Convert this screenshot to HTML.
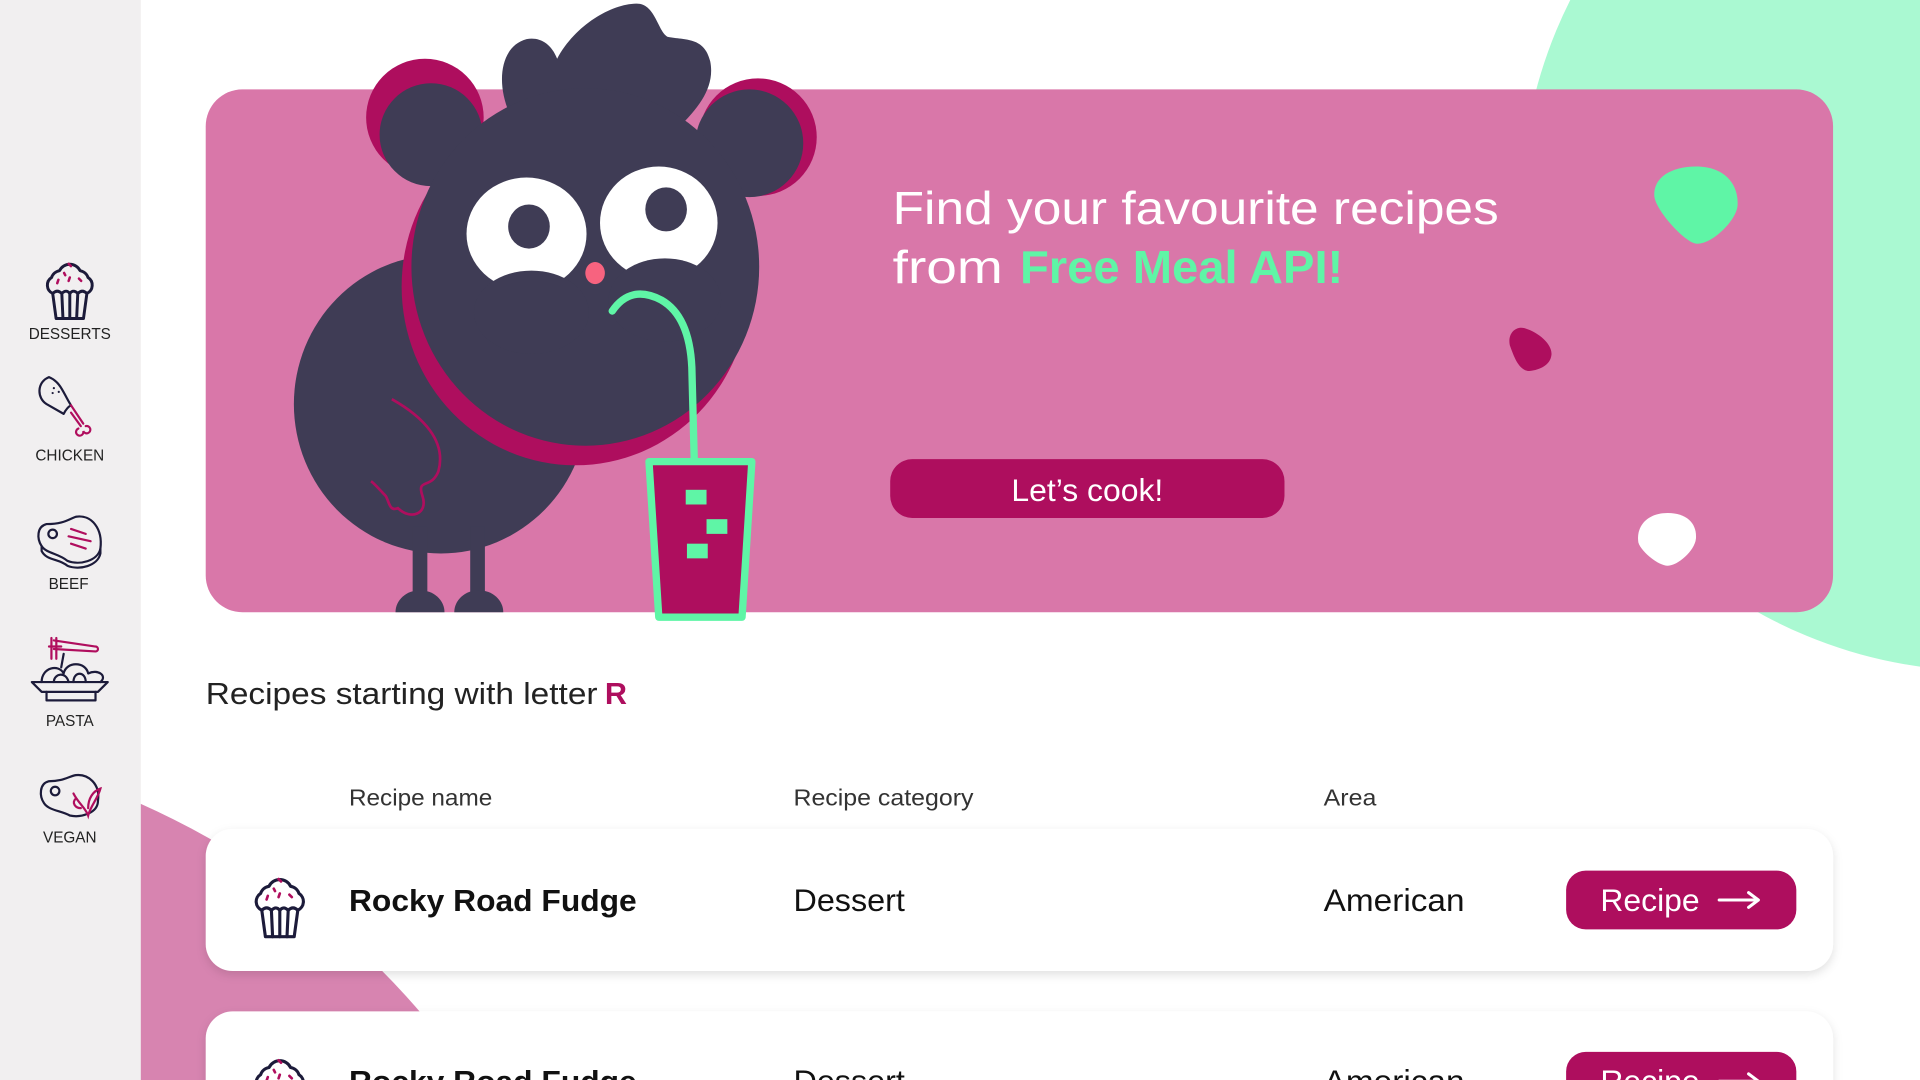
<!DOCTYPE html>
<html><head><meta charset="utf-8"><style>
html,body{margin:0;padding:0;width:1920px;height:1080px;overflow:hidden;background:#fff}
svg{display:block}
text{font-family:"Liberation Sans",sans-serif}
</style></head><body>
<svg width="1920" height="1080" viewBox="0 0 1568 882" xmlns="http://www.w3.org/2000/svg">
<defs>
<filter id="sh" x="-5%" y="-20%" width="110%" height="150%"><feDropShadow dx="0" dy="3" stdDeviation="4" flood-color="#000" flood-opacity="0.12"/></filter>
<symbol id="cup" viewBox="0 0 50 58">
<g fill="none" stroke="#1c1b3a" stroke-width="2.6" stroke-linejoin="round" stroke-linecap="round">
<path d="M10 34 A8 8 0 0 1 9 20 A9 9 0 0 1 16 14 A10 10 0 0 1 34 14 A9 9 0 0 1 41 20 A8 8 0 0 1 40 34"/>
<path d="M10 34 Q14 30 18 34 Q22 30 25 34 Q28 30 32 34 Q36 30 40 34"/>
<path d="M10 34 L13 56 L37 56 L40 34"/>
<path d="M18 34 L19 56 M25 34 L25 56 M32 34 L31 56"/>
</g>
<g stroke="#b00e5e" stroke-width="2.2" stroke-linecap="round"><path d="M24 8 l2 2 M15 22 l-1 3 M25 20 l-1 3 M33 21 l2 2 M20 16 l1 2"/></g>
</symbol>
</defs>
<circle cx="1620" cy="170" r="378" fill="#aaf9d2"/>
<circle cx="-150" cy="1250" r="650" fill="#d784b0"/>
<rect x="0" y="0" width="115" height="882" fill="#f1eff0"/>
<rect x="168" y="73" width="1329" height="427" rx="30" fill="#d977a9"/>
<g>
<circle cx="347" cy="96" r="48" fill="#ae0e5e"/>
<circle cx="352" cy="110" r="42" fill="#3f3c55"/>
<circle cx="619" cy="112" r="48" fill="#ae0e5e"/>
<circle cx="612" cy="117" r="44" fill="#3f3c55"/>
<path d="M436 118 C405 95 400 40 430 32 C440 30 450 35 455 48 C470 20 500 3 520 3 C535 3 537 25 545 30 C560 33 575 30 580 50 C585 75 565 95 540 117 Z" fill="#3f3c55"/>
<ellipse cx="360" cy="330" rx="120" ry="122" fill="#3f3c55"/>
<ellipse cx="470" cy="234" rx="142" ry="146" fill="#ae0e5e"/>
<ellipse cx="478" cy="218" rx="142" ry="146" fill="#3f3c55"/>
<rect x="337" y="430" width="12" height="65" fill="#3f3c55"/>
<rect x="384" y="430" width="12" height="65" fill="#3f3c55"/>
<path d="M323 500 A20 18 0 0 1 363 500 Z" fill="#3f3c55"/>
<path d="M371 500 A20 18 0 0 1 411 500 Z" fill="#3f3c55"/>
<path d="M320 326 C345 340 365 360 358 385 C352 400 340 390 345 405 C350 420 335 425 325 415 C318 418 318 410 315 405 C310 400 306 395 303 393" fill="none" stroke="#ae0e5e" stroke-width="2.2"/>
<ellipse cx="430" cy="191" rx="49" ry="46" fill="#fff"/>
<ellipse cx="538" cy="182" rx="48" ry="46" fill="#fff"/>
<ellipse cx="434" cy="255" rx="47" ry="34" fill="#3f3c55"/>
<ellipse cx="543" cy="245" rx="46" ry="34" fill="#3f3c55"/>
<ellipse cx="432" cy="185" rx="17" ry="18" fill="#3f3c55"/>
<ellipse cx="544" cy="171" rx="17" ry="18" fill="#3f3c55"/>
<ellipse cx="486" cy="223" rx="8" ry="9" fill="#f7637f"/>
<path d="M500 254 Q515 232 540 245 Q563 258 565 300 L567 377" fill="none" stroke="#5ff5a6" stroke-width="6" stroke-linecap="round"/>
<path d="M530 377 L614 377 L606 504 L538 504 Z" fill="#ae0e5e" stroke="#5ff5a6" stroke-width="6" stroke-linejoin="round"/>
<rect x="560" y="400" width="17" height="12" fill="#5ff5a6"/>
<rect x="577" y="424" width="17" height="12" fill="#5ff5a6"/>
<rect x="561" y="444" width="17" height="12" fill="#5ff5a6"/>
</g>
<path d="M1385 136 C1410 136 1420 152 1419 168 C1418 180 1398 200 1385 199 C1376 198 1352 172 1351 160 C1350 145 1365 136 1385 136 Z" fill="#5ff5a6"/>
<path d="M1245 268 C1258 272 1268 282 1267 290 C1266 298 1258 302 1249 303 C1240 303 1236 290 1233 282 C1231 272 1238 266 1245 268 Z" fill="#ae0e5e"/>
<path d="M1362 419 C1378 419 1386 428 1385 440 C1384 450 1370 462 1362 462 C1354 462 1340 450 1338 443 C1336 430 1345 419 1362 419 Z" fill="#fff"/>
<text x="729" y="183" font-size="38" fill="#fff" textLength="495" lengthAdjust="spacingAndGlyphs">Find your favourite recipes</text>
<text x="729" y="231" font-size="38" fill="#fff" textLength="90" lengthAdjust="spacingAndGlyphs">from</text>
<text x="833" y="231" font-size="38" font-weight="bold" fill="#5ff5a6" textLength="264" lengthAdjust="spacingAndGlyphs">Free Meal API!</text>
<rect x="727" y="375" width="322" height="48" rx="18" fill="#ae0e5e"/>
<text x="888" y="409" font-size="26" fill="#fff" text-anchor="middle" textLength="124" lengthAdjust="spacingAndGlyphs">Let’s cook!</text>
<g fill="#222" font-size="12.5" text-anchor="middle">
<text x="57" y="277">DESSERTS</text>
<text x="57" y="376">CHICKEN</text>
<text x="56" y="481">BEEF</text>
<text x="57" y="593">PASTA</text>
<text x="57" y="688">VEGAN</text>
</g>
<use href="#cup" x="33" y="208" width="48" height="54"/>
<g fill="none" stroke="#1c1b3a" stroke-width="1.8" stroke-linecap="round" stroke-linejoin="round">
<path d="M40 308 C30 312 30 325 38 330 L52 338 C54 334 56 332 58 331 C52 322 50 312 40 308 Z"/>
<path d="M38 428 C30 430 30 440 34 446 C38 452 48 452 55 458 C65 462 80 458 82 448 C84 432 75 420 62 422 C56 424 52 428 38 428 Z"/>
<path d="M34 446 L34 450 C38 458 48 456 55 462 C65 466 80 462 82 452 L82 448"/>
<circle cx="43" cy="436" r="3.5"/>
<path d="M26 557 L88 557 L80 565 L34 565 Z"/>
<path d="M38 565 L38 572 L78 572 L78 565"/>
<path d="M34 557 C34 545 48 542 52 550 C54 540 70 540 72 550 C80 546 88 552 82 557"/>
<path d="M44 557 C44 550 54 548 56 557 M60 557 C60 548 70 548 70 557"/>
<path d="M52 534 L50 545"/>
<path d="M40 638 C32 640 32 650 36 656 C40 662 50 662 57 666 C66 668 80 664 80 654 C82 640 72 632 62 633 C56 634 52 638 40 638 Z"/>
<circle cx="45" cy="646" r="3.5"/>
</g>
<g fill="none" stroke="#b00e5e" stroke-width="1.8" stroke-linecap="round">
<path d="M58 331 L68 346 M58 337 L66 348 M64 350 a3 3 0 1 0 4 2 a3 3 0 1 0 2 -4"/>
<path d="M58 432 L70 436 M56 438 L74 442 M58 444 L70 448"/>
<path d="M44 523 L78 528 A2 2 0 0 1 78 532 L44 530 M42 521 L42 538 M46 521 L46 538 M40 528 L50 528"/>
<path d="M60 648 C64 656 70 660 72 666 C74 658 80 652 82 644 C76 646 72 652 72 660 M62 652 C58 656 62 660 66 660"/>
</g>
<g fill="#1c1b3a"><circle cx="44" cy="317" r="0.9"/><circle cx="48" cy="320" r="0.9"/><circle cx="43" cy="321" r="0.9"/></g>
<text x="168" y="575" font-size="25" fill="#222" textLength="320" lengthAdjust="spacingAndGlyphs">Recipes starting with letter</text>
<text x="494" y="575" font-size="25" font-weight="bold" fill="#ae0e5e">R</text>
<g font-size="19" fill="#333">
<text x="285" y="658" textLength="117" lengthAdjust="spacingAndGlyphs">Recipe name</text>
<text x="648" y="658" textLength="147" lengthAdjust="spacingAndGlyphs">Recipe category</text>
<text x="1081" y="658" textLength="43" lengthAdjust="spacingAndGlyphs">Area</text>
</g>
<rect x="168" y="677" width="1329" height="116" rx="22" fill="#fff" filter="url(#sh)"/>
<use href="#cup" x="204" y="710" width="49" height="57"/>
<text x="285" y="744" font-size="25" font-weight="bold" fill="#111" textLength="235" lengthAdjust="spacingAndGlyphs">Rocky Road Fudge</text>
<text x="648" y="744" font-size="26" fill="#111" textLength="91" lengthAdjust="spacingAndGlyphs">Dessert</text>
<text x="1081" y="744" font-size="26" fill="#111" textLength="115" lengthAdjust="spacingAndGlyphs">American</text>
<rect x="1279" y="711" width="188" height="48" rx="16" fill="#ae0e5e"/>
<text x="1307" y="744" font-size="26" fill="#fff" textLength="81" lengthAdjust="spacingAndGlyphs">Recipe</text>
<path d="M1404 735 L1436 735 M1428 729 L1436 735 L1428 741" fill="none" stroke="#fff" stroke-width="2.5" stroke-linecap="round" stroke-linejoin="round"/>
<rect x="168" y="826" width="1329" height="116" rx="22" fill="#fff" filter="url(#sh)"/>
<use href="#cup" x="204" y="858" width="49" height="57"/>
<text x="285" y="892" font-size="25" font-weight="bold" fill="#111" textLength="235" lengthAdjust="spacingAndGlyphs">Rocky Road Fudge</text>
<text x="648" y="892" font-size="26" fill="#111" textLength="91" lengthAdjust="spacingAndGlyphs">Dessert</text>
<text x="1081" y="892" font-size="26" fill="#111" textLength="115" lengthAdjust="spacingAndGlyphs">American</text>
<rect x="1279" y="859" width="188" height="48" rx="16" fill="#ae0e5e"/>
<text x="1307" y="892" font-size="26" fill="#fff" textLength="81" lengthAdjust="spacingAndGlyphs">Recipe</text>
<path d="M1404 883 L1436 883 M1428 877 L1436 883 L1428 889" fill="none" stroke="#fff" stroke-width="2.5" stroke-linecap="round" stroke-linejoin="round"/>
</svg>
</body></html>
